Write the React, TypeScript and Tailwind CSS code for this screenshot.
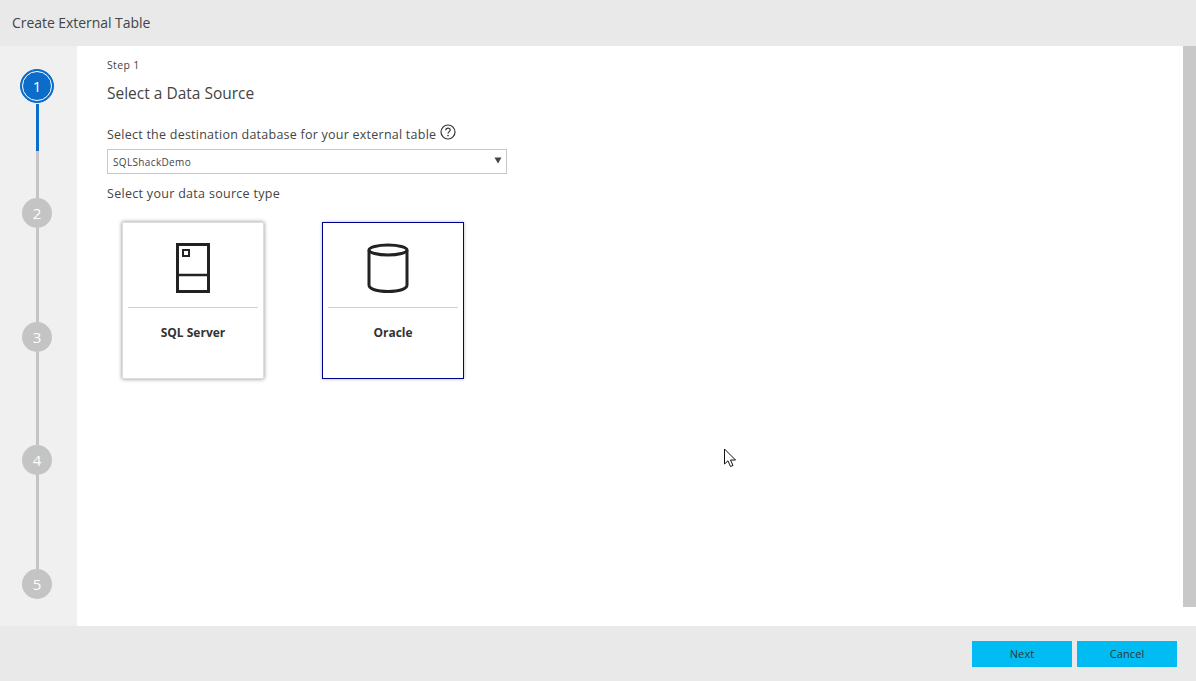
import React from "react";

const font = "font-['Open_Sans','Noto_Sans',sans-serif]";

const StepCircle = ({ n }: { n: number }) => (
  <div className="w-[30px] h-[30px] shrink-0 rounded-full bg-[#c4c4c4] flex items-center justify-center text-white text-[15px] leading-none">
    {n}
  </div>
);

const Line = ({ h, blue }: { h: string; blue?: boolean }) => (
  <div className={`w-[3px] ml-px ${h} ${blue ? "bg-[#0b6cc9]" : "bg-[#c4c4c4]"}`} />
);

const Stepper = () => (
  <div className="w-[77px] shrink-0 bg-[#f0f0f1] flex flex-col items-center pt-[23px] pr-[3px]">
    <div className="w-[34px] h-[34px] shrink-0 rounded-full bg-[#0b6cc9] border border-[#0b6cc9] flex items-center justify-center">
      <div className="w-[30px] h-[30px] rounded-full border border-white flex items-center justify-center text-white text-[15px] leading-none">
        1
      </div>
    </div>
    <div className="h-px" />
    <Line h="h-[47px]" blue />
    <Line h="h-[47px]" />
    <StepCircle n={2} />
    <Line h="h-[94px]" />
    <StepCircle n={3} />
    <Line h="h-[93px]" />
    <StepCircle n={4} />
    <Line h="h-[94px]" />
    <StepCircle n={5} />
  </div>
);

const ServerIcon = () => (
  <svg width="34" height="50" viewBox="0 0 34 50" fill="none" stroke="#222222">
    <rect x="1.5" y="1.5" width="31" height="47" strokeWidth="3" />
    <line x1="1" y1="32" x2="33" y2="32" strokeWidth="2.5" />
    <rect x="7" y="7" width="6" height="6" strokeWidth="2" />
  </svg>
);

const DatabaseIcon = () => (
  <svg width="42" height="50" viewBox="0 0 42 50" fill="none" stroke="#222222" strokeWidth="3" className="mr-[10px]">
    <ellipse cx="21" cy="7" rx="19" ry="5" />
    <path d="M2 7V42C2 46 10 48.5 21 48.5C32 48.5 40 46 40 42V7" />
  </svg>
);

const SourceCard = ({
  label,
  icon,
  selected,
}: {
  label: string;
  icon: React.ReactNode;
  selected?: boolean;
}) => (
  <div
    className={`w-[142px] h-[157px] bg-white border flex flex-col items-center px-[5px] ${
      selected
        ? "border-[#000090] shadow-[0_0_3px_rgba(0,0,0,0.3)]"
        : "border-[#dddddd] shadow-[0_0_4px_rgba(0,0,0,0.45)]"
    }`}
  >
    <div className="h-[85px] w-full flex items-start justify-center pt-[20px] border-b border-[#d0d0d0]">
      {icon}
    </div>
    <div className="mt-[17px] text-[12px] leading-[16px] font-bold text-[#333333]">{label}</div>
  </div>
);

const Cursor = () => (
  <svg
    className="absolute left-[646px] top-[402px]"
    width="14"
    height="20"
    viewBox="0 0 14 20"
    fill="white"
    stroke="#111111"
    strokeWidth="1"
  >
    <path d="M1.5 1V16L5 12.8L7.5 18.5L10 17.4L7.5 12H12.5Z" />
  </svg>
);

export default function App() {
  return (
    <div className={`w-[1196px] h-[681px] flex flex-col overflow-hidden bg-white ${font} text-[#444444]`}>
      <div className="h-[46px] shrink-0 bg-[#e9e9ea] flex items-center pl-3 pb-px text-[14px] tracking-[-0.05px] text-[#444444]">
        Create External Table
      </div>
      <div className="flex-1 flex min-h-0">
        <Stepper />
        <div className="relative flex-1 flex min-w-0">
          <div className="flex-1 pl-[30px] pt-[12px]">
            <div className="text-[10.5px] leading-[14px] tracking-[0.35px]">Step 1</div>
            <div className="mt-[10px] text-[15.5px] leading-[22px]">Select a Data Source</div>
            <div className="mt-[21px] flex items-center gap-[4px] h-[20px] text-[12.5px] tracking-[0.24px]">
              <span>Select the destination database for your external table</span>
              <svg width="16" height="16" viewBox="0 0 16 16" fill="none" stroke="#333333" className="-mt-1.5">
                <circle cx="8" cy="8" r="7" strokeWidth="1.2" />
                <path d="M5.8 6.3C5.8 5 6.8 4.2 8 4.2C9.3 4.2 10.2 5 10.2 6.1C10.2 7.6 8 7.7 8 9.6" strokeWidth="1.2" />
                <circle cx="8" cy="11.6" r="0.8" fill="#333333" stroke="none" />
              </svg>
            </div>
            <div className="mt-[4px] w-[400px] h-[25px] border border-[#c8c8c8] flex items-center justify-between pl-[5px] pr-[4px] text-[10px] tracking-[0.35px]">
              <span className="pt-px">SQLShackDemo</span>
              <svg width="8" height="7" viewBox="0 0 8 7" fill="#444444" className="-mt-0.5">
                <path d="M0.5 0.5H7.5L4 6.5Z" />
              </svg>
            </div>
            <div className="mt-[11px] h-[18px] leading-[18px] text-[12.5px] tracking-[0.3px]">
              Select your data source type
            </div>
            <div className="mt-[19px] ml-[15px] flex gap-[58px]">
              <SourceCard label="SQL Server" icon={<ServerIcon />} />
              <SourceCard label="Oracle" icon={<DatabaseIcon />} selected />
            </div>
          </div>
          <div className="w-[13px] h-[561px] shrink-0 bg-[#c8c8c8]" />
          <Cursor />
        </div>
      </div>
      <div className="h-[55px] shrink-0 bg-[#e9e9ea] flex items-start justify-end gap-[5px] pt-[15px] pr-[19px]">
        <button className="w-[100px] h-[26px] bg-[#00bcf2] text-[#333333] text-[11px] tracking-[0.1px]">Next</button>
        <button className="w-[100px] h-[26px] bg-[#00bcf2] text-[#333333] text-[11px] tracking-[0.1px]">Cancel</button>
      </div>
    </div>
  );
}
